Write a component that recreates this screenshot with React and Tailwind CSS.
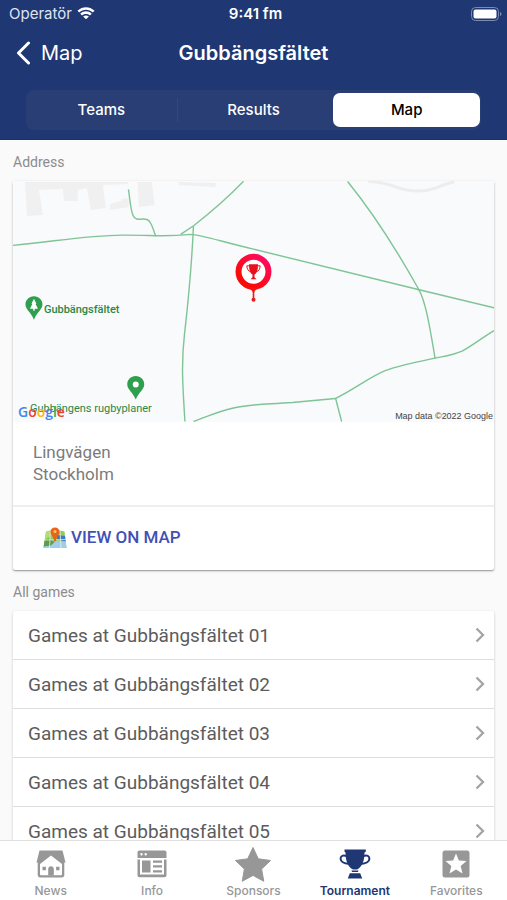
import React from "react";

const games = ["01", "02", "03", "04", "05"];

const WifiIcon = () => (
  <svg viewBox="0 0 18 14" className="w-[18px] h-[14px]" fill="currentColor" aria-hidden="true">
    <path d="M9 2.7c2.5 0 4.8 1 6.5 2.6.1.1.3.1.5 0l1.3-1.3c.1-.1.1-.4 0-.5C12.6-1 5.4-1 .7 3.5c-.1.1-.1.4 0 .5L2 5.3c.2.1.4.1.5 0C4.2 3.7 6.5 2.7 9 2.7z" />
    <path d="M9 6.9c1.400 0 2.700.5 3.700 1.400.1.1.4.1.5 0l1.300-1.300c.2-.2.2-.4 0-.5C11.400 3.600 6.600 3.600 3.500 6.500c-.2.1-.2.3 0 .5l1.300 1.300c.1.1.4.1.5 0 1-.9 2.300-1.400 3.700-1.400z" />
    <path d="M11.600 9.800c.2-.1.2-.4 0-.5-1.500-1.200-3.700-1.200-5.200 0-.2.1-.2.4 0 .5l2.300 2.300c.2.2.4.2.6 0z" />
  </svg>
);

const BatteryIcon = () => (
  <svg viewBox="0 0 31 15" className="w-[31px] h-[15px]" aria-hidden="true">
    <rect x="0.5" y="0.5" width="27" height="13" rx="4" fill="none" stroke="#7c89b3" />
    <rect x="2.5" y="2.5" width="23" height="9" rx="2" fill="#fff" />
    <path d="M29 5v4c.9-.3 1.500-1.100 1.500-2S29.900 5.300 29 5z" fill="#7c89b3" />
  </svg>
);

const BackIcon = () => (
  <svg viewBox="0 0 14 24" className="w-[14px] h-[24px]" fill="none" aria-hidden="true">
    <path d="M12.500 2L2.500 12l10 10" stroke="#fff" strokeWidth="3" strokeLinecap="round" strokeLinejoin="round" />
  </svg>
);

const RowArrow = () => (
  <svg viewBox="0 0 10 16" className="w-[10px] h-[16px]" fill="none" aria-hidden="true">
    <path d="M1.500 1.500L8 8l-6.500 6.500" stroke="#a3a3a3" strokeWidth="2.300" />
  </svg>
);

const MapEmoji = () => (
  <svg viewBox="0 0 24 22" className="w-[24px] h-[22px]" aria-hidden="true">
    <path d="M3 4.500l4.500-1L12 5l5-1.500 4.500 1L23.500 21H.5z" fill="#8ecb5b" />
    <path d="M3 4.500l4.500-1-.8 6L1.800 12z" fill="#b5dc7c" />
    <path d="M14 8l8 1 .7 5.500-8.700-2z" fill="#3f78c4" />
    <path d="M1.300 16l6-3 7 1 8.400.5.8 6.500H.5z" fill="#9fcdec" />
    <path d="M1.500 13.500l5-2 5 3.500-3.500 3.500-7.300 1z" fill="#5d9c4a" />
    <path d="M7.500 3.500L6.500 21M17 3.500l1 17.500M1.500 13l21.500-.5" stroke="#eef3d5" strokeWidth="0.800" fill="none" />
    <path d="M12 .5c2.600 0 4.500 1.900 4.500 4.300 0 2.800-2.800 4.200-3.500 9.400h-2C10.300 9 7.500 7.600 7.500 4.800 7.500 2.400 9.400.5 12 .5z" fill="#e8641b" />
    <circle cx="12" cy="4.600" r="1.500" fill="#f8c46d" />
  </svg>
);

const HouseIcon = () => (
  <svg viewBox="0 0 30 28" className="w-[30px] h-[28px]" aria-hidden="true">
    <path d="M3.500.5h23L29.500 12.500H.5z" fill="currentColor" />
    <path d="M1.700 11h26.600v14c0 1.500-1 2.500-2.500 2.500H4.200c-1.500 0-2.500-1-2.500-2.500z" fill="currentColor" />
    <path d="M15 5.500l11 8.500v10c0 .8-.5 1.300-1.300 1.300H5.300c-.8 0-1.300-.5-1.300-1.300V14z" fill="#fff" />
    <path d="M12.200 25.500v-6.300c0-1.800 1.200-2.900 2.800-2.900s2.800 1.100 2.800 2.900v6.300zM6.500 16.800h3.400v3.400H6.500zM20.100 16.800h3.400v3.400h-3.400z" fill="currentColor" />
  </svg>
);

const InfoIcon = () => (
  <svg viewBox="0 0 30 28" className="w-[30px] h-[28px]" fill="currentColor" aria-hidden="true">
    <path
      fillRule="evenodd"
      d="M2.500.5h25c1.200 0 2 .8 2 2V8H.5V2.500c0-1.200.8-2 2-2zM4.500 3a1.200 1.200 0 100 2.400 1.200 1.200 0 000-2.400zM8.700 3a1.200 1.200 0 100 2.400 1.200 1.200 0 000-2.400z"
    />
    <path fillRule="evenodd" d="M.5 9.500H3v15h24v-15h2.500v15.700c0 1.200-.8 2-2 2h-25c-1.200 0-2-.8-2-2z" />
    <path d="M5 10.500h8.500v12H5zM16 10.500h9v2.300h-9zM16 15.300h9v2.300h-9zM16 20.200h9v2.300h-9z" />
  </svg>
);

const StarIcon = () => (
  <svg viewBox="0 0 38 36" className="w-[38px] h-[36px]" fill="currentColor" aria-hidden="true">
    <path
      d="M19 1.500l5.300 11.300 12.200 1.700-8.900 8.600 2.200 12.200L19 29.400 8.200 35.300l2.200-12.200-8.900-8.600 12.200-1.700z"
      stroke="currentColor"
      strokeLinejoin="round"
    />
  </svg>
);

const TrophyIcon = () => (
  <svg viewBox="0 0 32 30" className="w-[32px] h-[30px]" aria-hidden="true">
    <path d="M5.500.5h21.300v2.200l-1.300.8C25.500 12 23 18 18 20.500h-4C9 18 6.500 12 6.500 3.500l-1-.8z" fill="currentColor" />
    <path
      d="M7.500 7C3.500 5.500 1.500 7.500 1.600 10c.2 3 3.900 4.500 8.900 5M24.500 7c4-1.500 6 .5 5.900 3-.2 3-3.900 4.500-8.900 5"
      fill="none"
      stroke="currentColor"
      strokeWidth="2"
    />
    <path d="M12.500 21.500h7l-.5 1.500h-6zM10.800 24.300h10.400l2 5.200H8.800z" fill="currentColor" />
  </svg>
);

const FavoriteIcon = () => (
  <svg viewBox="0 0 28 28" className="w-[28px] h-[28px]" aria-hidden="true">
    <rect x="0.5" y="0.5" width="27" height="27" rx="2.500" fill="currentColor" />
    <path d="M14 3.500l2.900 7 7.600.6-5.800 5 1.800 7.400-6.500-4-6.500 4 1.800-7.400-5.800-5 7.600-.6z" fill="#fff" />
  </svg>
);

const navItems = [
  { label: "News", icon: HouseIcon },
  { label: "Info", icon: InfoIcon },
  { label: "Sponsors", icon: StarIcon },
  { label: "Tournament", icon: TrophyIcon, active: true },
  { label: "Favorites", icon: FavoriteIcon },
];

const VenueMap = () => (
  <svg viewBox="0 0 482 241" className="block w-full bg-[#f8fafb]" role="img" aria-label="Gubbängsfältet">
    <defs>
      <linearGradient id="pin" x1="1" y1="0" x2="0.3" y2="0.8">
        <stop offset="0" stopColor="#ff0a6c" />
        <stop offset="1" stopColor="#fb0a0a" />
      </linearGradient>
    </defs>
    {/* buildings */}
    <g fill="#f0f0f0">
      <path d="M12 1h103v2L90 4l3 23-15 2-4-22-9 2v11H51L50 8 26 9l4 25-16 1z" />
      <path d="M97 23l11-3 1-2 7-1v9l-19 3z" />
      <path d="M125 1h14l3 23-16 2zM166 1l37 1v4l-37-2z" />
    </g>
    <path d="M356 0c10 1 20 3 28 6 14 5 28 5 40 1 7-3 11-5 18-6" fill="none" stroke="#ededed" strokeWidth="3" />
    {/* walking paths */}
    <g fill="none" stroke="#7fc496" strokeWidth="1.400">
      <path d="M0 64.500C40 61 72 54.500 110 54.200c30-.2 40 2.300 68-.7 10 .3 30 7 63 14.800L407 109l75 18" />
      <path d="M115.700 8.300c1.500 10 2 20 4.500 26 1.500 3.500 3 4.300 6.500 4 7-.5 9.300-.5 11.800 5 2 4 3 8 4.500 12" />
      <path d="M168 53.500l13-8.700c18-14 35-29 50-44.500" />
      <path d="M180.800 45c-1.500 35-4.500 70-9 109-3.500 30-1.500 55 .5 87" />
      <path d="M335.300.5C360 31 385 70 406.500 108.500c6 10 10 30 16.500 69.500" />
      <path d="M181 241c14-5 24-10 40-13.500 20-4.500 30-3.500 59-5.500l43-4c20-10 35-22 50-28 15-5.500 33-9 50-12.500 10-2 18-3 27-7 8-4 18-12 32-20.500" />
      <path d="M323.300 218l6 23" />
    </g>
    {/* places */}
    <g fill="#2f9e4f">
      <path d="M21 115.500c5 0 8.500 3.700 8.500 8.300 0 5-5 7-8.500 15.200-3.500-8.200-8.500-10.200-8.500-15.200 0-4.600 3.500-8.300 8.500-8.300z" />
      <path d="M123 195.500c5 0 8.500 3.700 8.500 8.300 0 5-5 7-8.500 15.200-3.500-8.200-8.500-10.200-8.500-15.200 0-4.600 3.500-8.300 8.500-8.300z" />
    </g>
    <path d="M21 118l2.500 5h-1l2.500 5h-3.300v2h-1.400v-2H17l2.500-5h-1z" fill="#fff" />
    <circle cx="123" cy="204" r="3" fill="#fff" />
    <g className="font-['Roboto',sans-serif] text-[11px]" fill="#2a8746">
      <text x="31" y="132" className="font-medium">Gubbängsfältet</text>
      <text x="17" y="231">Gubbängens rugbyplaner</text>
    </g>
    <text x="5" y="236" className="font-['Open_Sans',sans-serif] text-[14px] font-semibold">
      <tspan fill="#4285f4">G</tspan>
      <tspan fill="#ea4335">o</tspan>
      <tspan fill="#fbbc05">o</tspan>
      <tspan fill="#4285f4">g</tspan>
      <tspan fill="#34a853">l</tspan>
      <tspan fill="#ea4335">e</tspan>
    </text>
    <text x="481" y="238" textAnchor="end" className="font-['Liberation_Sans',sans-serif] text-[9px]" fill="#444">
      Map data ©2022 Google
    </text>
    {/* venue pin */}
    <circle cx="241" cy="91" r="15" fill="#fff" stroke="url(#pin)" strokeWidth="6" />
    <path d="M229 104c6 3 10.500 4 11.200 8v7h1.600v-7c.7-4 5.200-5 11.200-8-7 4-17 4-24 0z" fill="#f51515" />
    <circle cx="241" cy="119" r="2" fill="#e81a1a" />
    <g transform="translate(233.5 83)">
      <path d="M3 .3h9v1.300c0 5-1.500 8-3.500 9.200v2.700l2 2h-6l2-2v-2.700C4.500 9.600 3 6.600 3 1.600z" fill="#e8101c" />
      <path d="M3 2H.8c.2 3.500 1.700 5.500 4 6M12 2h2.200c-.2 3.500-1.700 5.500-4 6" fill="none" stroke="#e8101c" />
    </g>
  </svg>
);

const App = () => {
  return (
    <div className="flex flex-col h-screen bg-[#fafafa] font-['Roboto',sans-serif]">
      <header className="shrink-0 bg-[#1f3773] text-white font-['Inter',sans-serif] border-b border-[#1b3066]">
        <div className="grid grid-cols-3 items-center h-7 pl-[9px] pr-[5px] text-[15px]">
          <div className="flex items-center gap-[5px] text-[#dfe4f2]">
            Operatör
            <span className="text-white"><WifiIcon /></span>
          </div>
          <div className="text-center font-semibold">9:41 fm</div>
          <div className="flex justify-end"><BatteryIcon /></div>
        </div>

        <div className="grid grid-cols-[1fr_auto_1fr] items-center h-[49px] px-4">
          <button type="button" className="flex items-center gap-[11px] text-xl">
            <BackIcon />
            Map
          </button>
          <h1 className="text-xl font-semibold">Gubbängsfältet</h1>
        </div>

        <div className="px-[26px] pt-[13px] pb-[9px]">
          <div className="grid grid-cols-3 h-10 rounded-lg bg-[#283e75] text-[15px] font-medium">
            <button type="button" className="my-2 border-r border-[#33487c]">Teams</button>
            <button type="button">Results</button>
            <button type="button" aria-pressed="true" className="my-[3px] ml-1 mr-px rounded-[7px] bg-white text-black">
              Map
            </button>
          </div>
        </div>
      </header>

      <main className="flex-1 min-h-0 overflow-y-auto [scrollbar-width:none] px-[13px]">
        <h2 className="pt-3 pb-[9px] text-sm text-[#8c8c8c]">Address</h2>
        <section className="bg-white rounded-xs shadow-[0_1px_3px_rgba(0,0,0,0.2),0_1px_1px_rgba(0,0,0,0.25)]">
          <VenueMap />
          <address className="px-5 pt-[19px] pb-5 not-italic text-[17px] leading-[22px] text-[#7b7b7b]">
            Lingvägen
            <br />
            Stockholm
          </address>
          <div className="border-t-2 border-[#eeeeee]">
            <a href="#map" className="flex items-center gap-1 h-[63px] px-[30px] text-[17px] font-medium text-[#3f51b5]">
              <MapEmoji />
              VIEW ON MAP
            </a>
          </div>
        </section>

        <h2 className="pt-3 pb-[9px] text-sm text-[#8c8c8c]">All games</h2>
        <ul className="bg-white rounded-xs shadow-[0_1px_3px_rgba(0,0,0,0.2)]">
          {games.map((game) => (
            <li key={game} className="border-b border-[#dedede]">
              <a href={`#games-${game}`} className="flex items-center justify-between h-12 pl-[15px] pr-[9px] text-[19px] text-[#5c5c5c]">
                <span className="pt-[3px]">Games at Gubbängsfältet {game}</span>
                <RowArrow />
              </a>
            </li>
          ))}
        </ul>
      </main>

      <nav className="shrink-0 grid grid-cols-5 h-[60px] bg-white border-t border-[#e0e0e0] font-['Inter',sans-serif] text-xs font-medium">
        {navItems.map(({ label, icon: Icon, active }) => (
          <a
            key={label}
            href={`#${label.toLowerCase()}`}
            className={`flex flex-col items-center ${active ? "text-[#1f3773] font-semibold" : "text-[#979797]"}`}
          >
            <span className="flex items-center justify-center h-[42px] pt-1">
              <Icon />
            </span>
            <span className="leading-4">{label}</span>
          </a>
        ))}
      </nav>
    </div>
  );
};

export default App;
